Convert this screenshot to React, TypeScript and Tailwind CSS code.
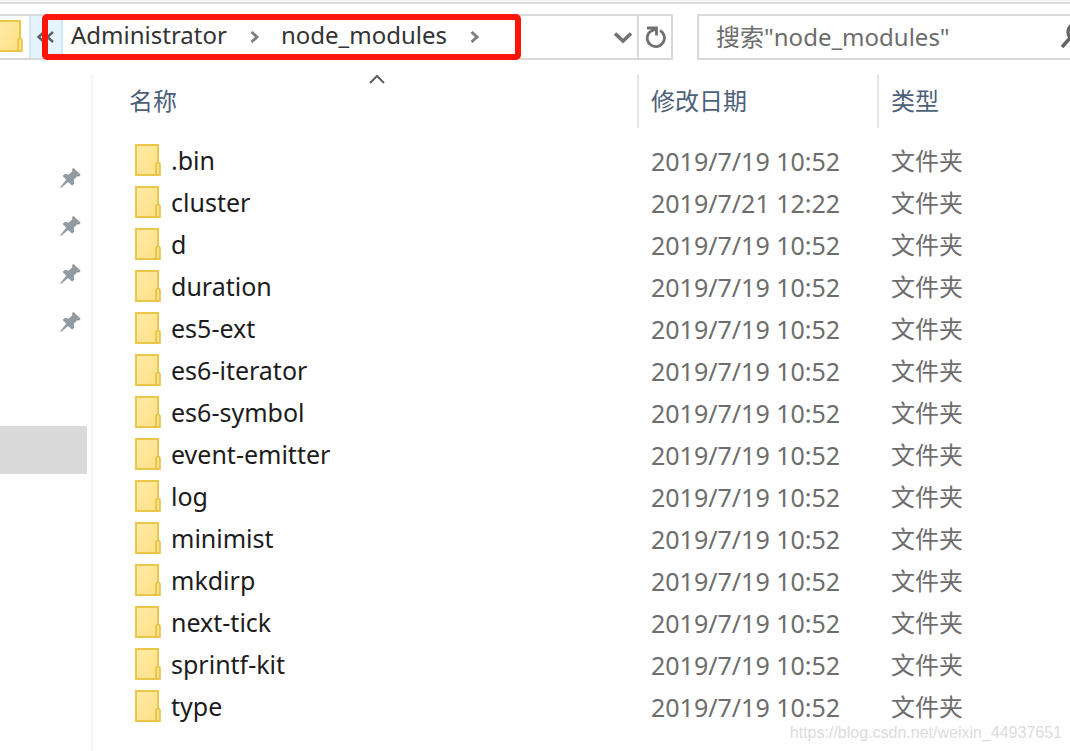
import * as React from 'react'

const files = [
  { name: '.bin', date: '2019/7/19 10:52' },
  { name: 'cluster', date: '2019/7/21 12:22' },
  { name: 'd', date: '2019/7/19 10:52' },
  { name: 'duration', date: '2019/7/19 10:52' },
  { name: 'es5-ext', date: '2019/7/19 10:52' },
  { name: 'es6-iterator', date: '2019/7/19 10:52' },
  { name: 'es6-symbol', date: '2019/7/19 10:52' },
  { name: 'event-emitter', date: '2019/7/19 10:52' },
  { name: 'log', date: '2019/7/19 10:52' },
  { name: 'minimist', date: '2019/7/19 10:52' },
  { name: 'mkdirp', date: '2019/7/19 10:52' },
  { name: 'next-tick', date: '2019/7/19 10:52' },
  { name: 'sprintf-kit', date: '2019/7/19 10:52' },
  { name: 'type', date: '2019/7/19 10:52' },
]

function FolderIcon() {
  return (
    <svg width="28" height="34" viewBox="0 0 28 34" className="block shrink-0" aria-hidden="true">
      <defs>
        <linearGradient id="folder" x1="0" y1="0" x2="1" y2="1">
          <stop offset="0" stopColor="#ffeaa6" />
          <stop offset="1" stopColor="#fee086" />
        </linearGradient>
      </defs>
      <path d="M2 1H24V31H2Z" fill="url(#folder)" stroke="#eac74a" strokeWidth="2" />
      <path d="M22 31V21Q22 18.500 24 18.500Q26 18.500 26 20.500V31Z" fill="#fbdf84" stroke="#e5c045" strokeWidth="1.6" />
    </svg>
  )
}

function PinIcon() {
  return (
    <svg width="22" height="22" viewBox="0 0 22 22" fill="#929ba2" aria-hidden="true">
      <path d="M14.500 1L21.500 7.400L20.500 9.400L18.200 9.200L14.800 12.800L15.200 16.800L13.200 18.800L9 15L2 21L1.200 20.200L7.200 12.800L3.600 9L5.600 7L9.800 7.400L13.400 4.200L13 2Z" />
    </svg>
  )
}

function Chevron() {
  return (
    <svg width="12" height="14" viewBox="0 0 12 14" fill="none" stroke="#808080" strokeWidth="3" aria-hidden="true">
      <path d="M3.500 2L9 7L3.500 12" />
    </svg>
  )
}

function AddressBar() {
  return (
    <div className="flex h-[46px] gap-6">
      <nav aria-label="地址" className="relative flex min-w-0 flex-1 border-y-2 border-r-2 border-[#d9d9d9] text-[24px] text-[#333333]">
        <div className="flex w-[29px] items-center overflow-hidden">
          <div className="-ml-1">
            <FolderIcon />
          </div>
        </div>
        <button aria-label="更多" className="flex w-[34px] items-center border-x-2 border-[#cce8ff] bg-[#e5f3ff] pl-1">
          <svg width="20" height="14" viewBox="0 0 20 14" fill="none" stroke="#606060" strokeWidth="2.400">
            <path d="M9 2L3.500 7L9 12M18 2L12.500 7L18 12" />
          </svg>
        </button>
        <div className="flex items-center pl-2 pb-1">
          <button>Administrator</button>
        </div>
        <button aria-label="展开 Administrator" className="flex w-[54px] items-center justify-center">
          <Chevron />
        </button>
        <div className="flex items-center pb-1">
          <button>node_modules</button>
        </div>
        <button aria-label="展开 node_modules" className="flex w-[54px] items-center justify-center">
          <Chevron />
        </button>
        <div className="flex flex-1 justify-end">
          <button aria-label="以前的位置" className="flex w-7 items-center justify-center">
            <svg width="20" height="14" viewBox="0 0 20 14" fill="none" stroke="#727272" strokeWidth="3.600">
              <path d="M2 3.500L10 11L18 3.500" />
            </svg>
          </button>
          <button aria-label="刷新" className="flex w-[34px] items-center justify-center border-l-2 border-[#d9d9d9]">
            <svg width="22" height="24" viewBox="0 0 22 24" fill="none" stroke="#707070" strokeWidth="2.800">
              <path d="M16 5.500A8.600 8.600 0 1 1 4.500 8.500Q6 6 11 4.500M3 3H12.500V10.500" />
            </svg>
          </button>
        </div>
        <div className="pointer-events-none absolute -top-[2px] left-[42px] h-[46px] w-[479px] rounded-[5px] border-[6px] border-[#fe1509]" />
      </nav>
      <div className="flex w-[373px] items-center overflow-hidden border-y-2 border-l-2 border-[#d9d9d9] pl-[17px]">
        <input
          type="text"
          aria-label="搜索"
          placeholder={'搜索"node_modules"'}
          className="h-9 w-[300px] text-[24px] text-[#6d6d6d] outline-none placeholder:text-[#6d6d6d]"
        />
        <svg width="30" height="30" viewBox="0 0 30 30" fill="none" stroke="#666666" strokeWidth="3.500" className="ml-auto -mr-5 shrink-0" aria-hidden="true">
          <path d="M2 25L10 16" />
          <circle cx="16" cy="10" r="8" />
        </svg>
      </div>
    </div>
  )
}

function Sidebar() {
  return (
    <aside className="w-[93px] shrink-0 border-r-2 border-[#f5f5f5] pt-20 pr-1">
      <ul>
        {[1, 2, 3, 4].map((pin) => (
          <li key={pin} className="flex h-12 items-center justify-end pr-[6px]">
            <PinIcon />
          </li>
        ))}
      </ul>
      <div className="mt-20 h-12 bg-[#d9d9d9]" />
    </aside>
  )
}

function FileTable() {
  return (
    <table className="min-w-0 flex-1 table-fixed border-collapse text-left">
      <thead className="text-[24px] text-[#4c607a]">
        <tr>
          <th className="p-0 pb-3 font-normal">
            <div className="relative ml-6 flex h-[54px] items-center border-r-2 border-[#e5e5e5] pl-3">
              名称
              <svg width="16" height="10" viewBox="0 0 16 10" fill="none" stroke="#606060" strokeWidth="2" className="absolute top-0 left-1/2 -ml-2" aria-hidden="true">
                <path d="M1 9L8 2L15 9" />
              </svg>
            </div>
          </th>
          <th className="w-60 p-0 pb-3 font-normal">
            <div className="flex h-[54px] items-center border-r-2 border-[#e5e5e5] pl-3">修改日期</div>
          </th>
          <th className="w-[191px] p-0 pb-3 font-normal">
            <div className="flex h-[54px] items-center pl-3">类型</div>
          </th>
        </tr>
      </thead>
      <tbody>
        {files.map((file) => (
          <tr key={file.name} className="h-[42px]">
            <td className="p-0 pl-[41px]">
              <div className="flex h-[42px] items-center gap-[9px] text-[25px] text-[#1c1c1c]">
                <FolderIcon />
                {file.name}
              </div>
            </td>
            <td className="p-0 pl-3 text-[25px] leading-[42px] text-[#6d6d6d]">{file.date}</td>
            <td className="p-0 pl-3 text-[24px] leading-[42px] text-[#6d6d6d]">文件夹</td>
          </tr>
        ))}
      </tbody>
    </table>
  )
}

export default function App() {
  return (
    <div className="relative flex min-h-screen flex-col overflow-hidden bg-white font-['Noto_Sans','Noto_Sans_CJK_SC',sans-serif]">
      <div className="mb-[10px] h-1 border-b-2 border-[#dadbdc] bg-[#f5f6f7]" />
      <AddressBar />
      <main className="mt-[14px] flex flex-1 items-stretch">
        <Sidebar />
        <div className="flex flex-1 items-start">
          <FileTable />
        </div>
      </main>
      <div className="absolute right-2 bottom-2 font-['Liberation_Sans',sans-serif] text-[16px] leading-5 text-[#dcdcdc]">
        https://blog.csdn.net/weixin_44937651
      </div>
    </div>
  )
}
